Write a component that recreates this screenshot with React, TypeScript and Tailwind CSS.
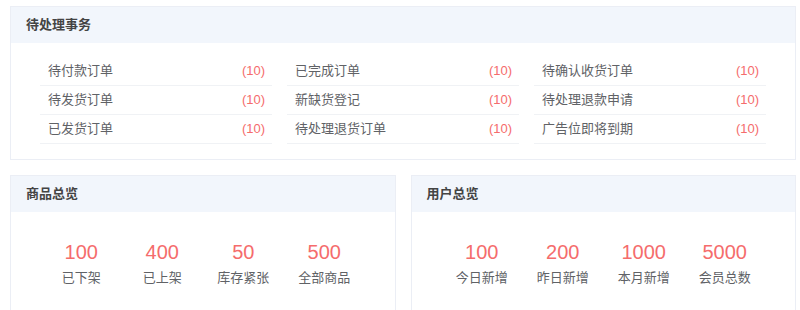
import React from "react";

const font = { fontFamily: '"Liberation Sans", "Noto Sans CJK SC", sans-serif' };

const pending = [
  ["待付款订单", "已完成订单", "待确认收货订单"],
  ["待发货订单", "新缺货登记", "待处理退款申请"],
  ["已发货订单", "待处理退货订单", "广告位即将到期"],
];

const goods = [
  { value: 100, label: "已下架" },
  { value: 400, label: "已上架" },
  { value: 50, label: "库存紧张" },
  { value: 500, label: "全部商品" },
];

const users = [
  { value: 100, label: "今日新增" },
  { value: 200, label: "昨日新增" },
  { value: 1000, label: "本月新增" },
  { value: 5000, label: "会员总数" },
];

function CardHeader({ title }: { title: string }) {
  return (
    <div className="h-[36px] bg-[#f2f6fc] px-[15px] flex items-center text-[13px] font-bold text-[#444]">
      {title}
    </div>
  );
}

function Overview({ title, items }: { title: string; items: { value: number; label: string }[] }) {
  return (
    <div className="flex-1 border border-[#ebeef5] bg-white h-[150px]">
      <CardHeader title={title} />
      <div className="w-[324px] mx-auto grid grid-cols-4 pt-[28px]">
        {items.map((it) => (
          <div key={it.label} className="flex flex-col items-center">
            <span className="text-[20px] leading-[24px] text-[#f56c6c]">{it.value}</span>
            <span className="mt-[2px] text-[13px] leading-[24px] text-[#606266]">{it.label}</span>
          </div>
        ))}
      </div>
    </div>
  );
}

export default function App() {
  // 首页看板
  return (
    <div className="w-[800px] h-[310px] overflow-hidden bg-white pt-[6px] pl-[10px] pr-[4px]" style={font}>
      {/* 待处理事务 */}
      <div className="border border-[#ebeef5] bg-white">
        <CardHeader title="待处理事务" />
        <div className="grid grid-cols-3 gap-x-[15px] pl-[29px] pr-[29px] pt-[14px] pb-[15px]">
          {[0, 1, 2].map((col) => (
            <div key={col}>
              {pending.map((row) => (
                <div
                  key={row[col]}
                  className="h-[29px] flex items-center justify-between pl-[8px] pr-[7px] border-b border-[#f0f2f5] text-[13px]"
                >
                  <span className="text-[#606266]">{row[col]}</span>
                  <span className="text-[#f56c6c]">(10)</span>
                </div>
              ))}
            </div>
          ))}
        </div>
      </div>

      {/* 总览 */}
      <div className="flex gap-[15px] mt-[15px]">
        <Overview title="商品总览" items={goods} />
        <Overview title="用户总览" items={users} />
      </div>
    </div>
  );
}
